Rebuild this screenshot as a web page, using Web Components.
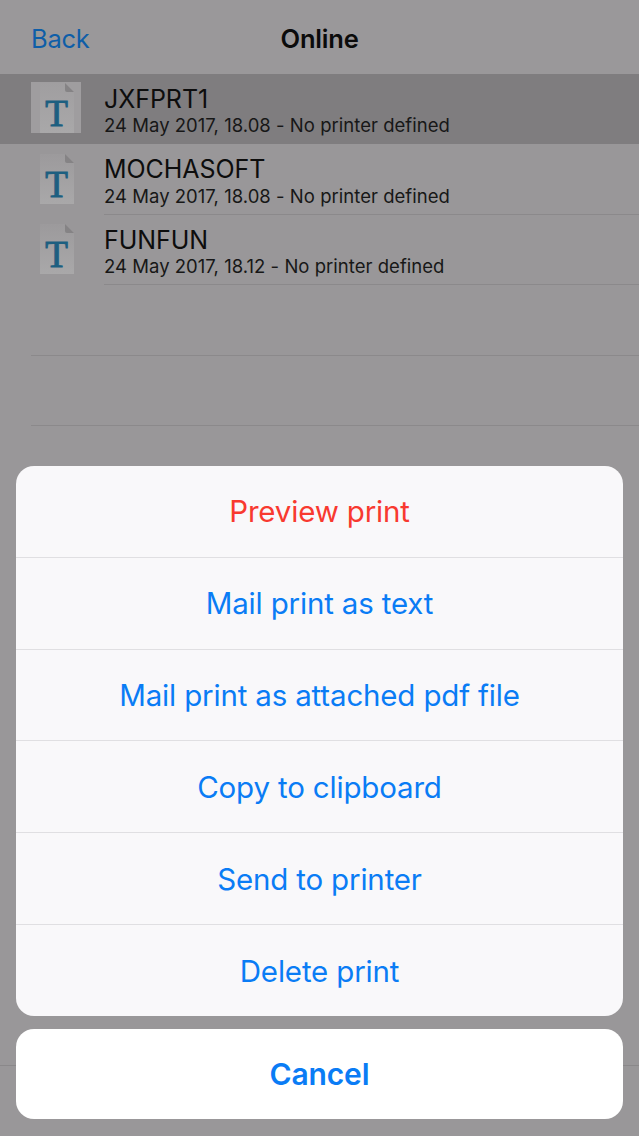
<!DOCTYPE html>
<html>
<head>
<meta charset="utf-8">
<title>Online</title>
<style>
  html, body { margin: 0; height: 100%; }
  body { background: #999799; font-family: Inter, "Liberation Sans", sans-serif; overflow: hidden; }
</style>
</head>
<body>
<app-screen>
  <nav-bar title="Online" back="Back"></nav-bar>
  <file-row name="JXFPRT1" meta="24 May 2017, 18.08 - No printer defined" selected></file-row>
  <file-row name="MOCHASOFT" meta="24 May 2017, 18.08 - No printer defined"></file-row>
  <file-row name="FUNFUN" meta="24 May 2017, 18.12 - No printer defined"></file-row>
  <file-row></file-row>
  <file-row></file-row>
  <action-sheet slot="overlay">
    <sheet-action danger>Preview print</sheet-action>
    <sheet-action>Mail print as text</sheet-action>
    <sheet-action>Mail print as attached pdf file</sheet-action>
    <sheet-action>Copy to clipboard</sheet-action>
    <sheet-action>Send to printer</sheet-action>
    <sheet-action>Delete print</sheet-action>
    <span slot="cancel">Cancel</span>
  </action-sheet>
</app-screen>

<script>
class AppScreen extends HTMLElement {
  connectedCallback() {
    this.attachShadow({ mode: 'open' });
    this.shadowRoot.innerHTML = `
      <style>
        :host { display: block; position: relative; width: 639px; height: 1136px; overflow: hidden; }
        .overlay { position: absolute; inset: 0; display: flex; flex-direction: column; justify-content: flex-end; }
        .bottom-line { position: absolute; left: 0; right: 0; top: 1065px; height: 1px; background: #8a888a; }
      </style>
      <slot></slot>
      <div class="bottom-line"></div>
      <div class="overlay"><slot name="overlay"></slot></div>
    `;
  }
}

class NavBar extends HTMLElement {
  connectedCallback() {
    this.attachShadow({ mode: 'open' });
    this.shadowRoot.innerHTML = `
      <style>
        :host { display: grid; grid-template-columns: 1fr auto 1fr; align-items: center; height: 73.5px; padding: 0 31px; box-sizing: border-box; background: #9a989a; }
        .back { color: #0e5ea8; font-size: 25.5px; letter-spacing: -0.25px; padding-top: 3px; }
        .title { color: #0b0b0b; font-size: 25.5px; font-weight: 600; letter-spacing: -0.2px; padding-top: 3px; }
      </style>
      <span class="back">${this.getAttribute('back')}</span>
      <span class="title">${this.getAttribute('title')}</span>
      <span></span>
    `;
  }
}

class FileRow extends HTMLElement {
  connectedCallback() {
    const name = this.getAttribute('name');
    const meta = this.getAttribute('meta');
    const selected = this.hasAttribute('selected');
    const gradId = 'page' + (name || '');
    this.attachShadow({ mode: 'open' });
    this.shadowRoot.innerHTML = `
      <style>
        :host { display: block; height: 70.5px; position: relative; }
        :host([selected]) { background: #7f7d7f; }
        .row { display: flex; height: 100%; }
        .thumb { flex: none; width: 104px; padding-left: 31px; box-sizing: border-box; }
        .thumb svg { display: block; margin-top: 8.5px; }
        .text { flex: 1; color: #0d0d0d; }
        .name { font-size: 25px; line-height: 30px; margin-top: 10px; letter-spacing: -0.05px; }
        .meta { font-size: 18.5px; line-height: 21px; margin-top: 1.5px; letter-spacing: 0.03px; color: #171717; white-space: nowrap; }
        .line { position: absolute; left: 104px; right: 0; bottom: 0; height: 1px; background: #8b898b; }
        :host(:not([name])) .line { left: 31px; }
        :host([selected]) .line { display: none; }
      </style>
      <div class="row">
        ${name ? `
        <div class="thumb">
          <svg width="50" height="52" viewBox="0 0 50 52">
            <defs>
              <linearGradient id="${gradId}" x1="0" y1="0" x2="0" y2="1">
                <stop offset="0" stop-color="${selected ? '#a09ea0' : '#9c9a9c'}"/>
                <stop offset="1" stop-color="#a9a8a9"/>
              </linearGradient>
            </defs>
            ${selected ? '<rect x="0" y="0" width="50" height="51" fill="#9f9d9f"/>' : ''}
            <path d="M9 1H34L43 10V51H9Z" fill="url(#${gradId})"/>
            <path d="M34 1L43 10H36Q34 10 34 8Z" fill="#858385"/>
            <text x="25.5" y="43.5" text-anchor="middle" font-family="'Liberation Serif', serif" font-size="37" fill="#1c5f80" stroke="#1c5f80" stroke-width="1">T</text>
          </svg>
        </div>
        <div class="text">
          <div class="name">${name}</div>
          <div class="meta">${meta}</div>
        </div>` : ''}
      </div>
      <div class="line"></div>
    `;
  }
}

class ActionSheet extends HTMLElement {
  connectedCallback() {
    this.attachShadow({ mode: 'open' });
    this.shadowRoot.innerHTML = `
      <style>
        :host { display: flex; flex-direction: column; gap: 13px; padding: 0 16px 17px; }
        .group { display: flex; flex-direction: column; background: #f9f8fa; border-radius: 18px; overflow: hidden; height: 550px; }
        .cancel { display: flex; align-items: center; justify-content: center; height: 90px; background: #fff; border-radius: 18px; color: #0a7cf5; font-size: 30px; font-weight: 600; letter-spacing: -0.15px; }
      </style>
      <div class="group"><slot></slot></div>
      <div class="cancel"><slot name="cancel"></slot></div>
    `;
  }
}

class SheetAction extends HTMLElement {
  connectedCallback() {
    this.attachShadow({ mode: 'open' });
    this.shadowRoot.innerHTML = `
      <style>
        :host { display: flex; flex: 1; align-items: center; justify-content: center; color: #0a7cf5; font-size: 29.5px; letter-spacing: -0.17px; border-top: 1px solid #e0dfe2; }
        :host(:first-child) { border-top: 0; }
        :host([danger]) { color: #f8392f; }
      </style>
      <slot></slot>
    `;
  }
}

customElements.define('app-screen', AppScreen);
customElements.define('nav-bar', NavBar);
customElements.define('file-row', FileRow);
customElements.define('action-sheet', ActionSheet);
customElements.define('sheet-action', SheetAction);
</script>
</body>
</html>
